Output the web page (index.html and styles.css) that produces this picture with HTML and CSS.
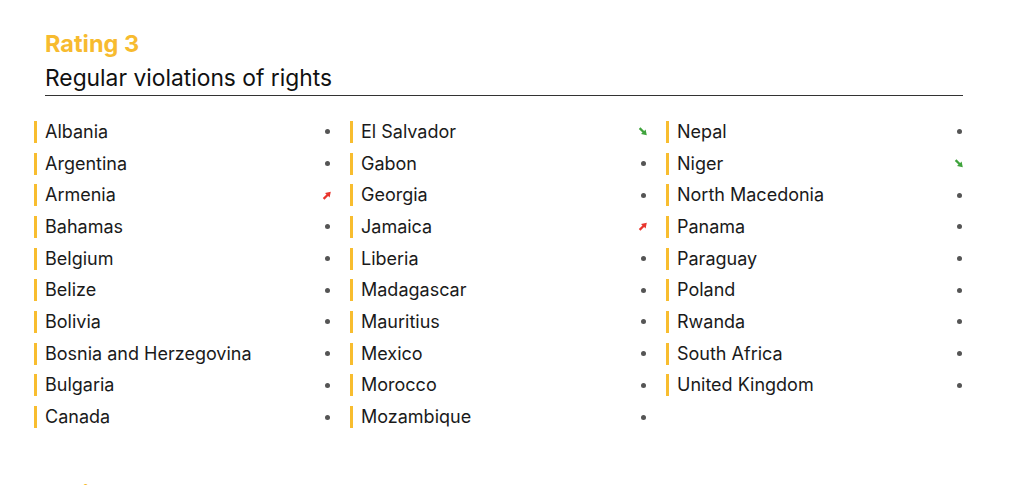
FILE: index.html
```html
<!DOCTYPE html>
<html lang="en">
<head>
<meta charset="utf-8">
<title>Rating 3</title>
<link rel="stylesheet" href="styles.css">
</head>
<body>
<section class="rating">
  <header class="rating-head">
    <h2 class="rating-title">Rating 3</h2>
    <h3 class="rating-sub">Regular violations of rights</h3>
  </header>
  <div class="cols">
    <ul class="col">
      <li class="row"><span class="name">Albania</span><span class="ind dot"></span></li>
      <li class="row"><span class="name">Argentina</span><span class="ind dot"></span></li>
      <li class="row"><span class="name">Armenia</span><span class="ind"><svg class="arrow up" viewBox="0 0 10 10"><path d="M0.8 7.6 L4.5 3.9 L3 2.4 L8.8 1.2 L7.6 7 L6.1 5.5 L2.4 9.2 Z"/></svg></span></li>
      <li class="row"><span class="name">Bahamas</span><span class="ind dot"></span></li>
      <li class="row"><span class="name">Belgium</span><span class="ind dot"></span></li>
      <li class="row"><span class="name">Belize</span><span class="ind dot"></span></li>
      <li class="row"><span class="name">Bolivia</span><span class="ind dot"></span></li>
      <li class="row"><span class="name">Bosnia and Herzegovina</span><span class="ind dot"></span></li>
      <li class="row"><span class="name">Bulgaria</span><span class="ind dot"></span></li>
      <li class="row"><span class="name">Canada</span><span class="ind dot"></span></li>
    </ul>
    <ul class="col">
      <li class="row"><span class="name">El Salvador</span><span class="ind"><svg class="arrow down" viewBox="0 0 10 10"><path d="M0.8 2.4 L4.5 6.1 L3 7.6 L8.8 8.8 L7.6 3 L6.1 4.5 L2.4 0.8 Z"/></svg></span></li>
      <li class="row"><span class="name">Gabon</span><span class="ind dot"></span></li>
      <li class="row"><span class="name">Georgia</span><span class="ind dot"></span></li>
      <li class="row"><span class="name">Jamaica</span><span class="ind"><svg class="arrow up" viewBox="0 0 10 10"><path d="M0.8 7.6 L4.5 3.9 L3 2.4 L8.8 1.2 L7.6 7 L6.1 5.5 L2.4 9.2 Z"/></svg></span></li>
      <li class="row"><span class="name">Liberia</span><span class="ind dot"></span></li>
      <li class="row"><span class="name">Madagascar</span><span class="ind dot"></span></li>
      <li class="row"><span class="name">Mauritius</span><span class="ind dot"></span></li>
      <li class="row"><span class="name">Mexico</span><span class="ind dot"></span></li>
      <li class="row"><span class="name">Morocco</span><span class="ind dot"></span></li>
      <li class="row"><span class="name">Mozambique</span><span class="ind dot"></span></li>
    </ul>
    <ul class="col">
      <li class="row"><span class="name">Nepal</span><span class="ind dot"></span></li>
      <li class="row"><span class="name">Niger</span><span class="ind"><svg class="arrow down" viewBox="0 0 10 10"><path d="M0.8 2.4 L4.5 6.1 L3 7.6 L8.8 8.8 L7.6 3 L6.1 4.5 L2.4 0.8 Z"/></svg></span></li>
      <li class="row"><span class="name">North Macedonia</span><span class="ind dot"></span></li>
      <li class="row"><span class="name">Panama</span><span class="ind dot"></span></li>
      <li class="row"><span class="name">Paraguay</span><span class="ind dot"></span></li>
      <li class="row"><span class="name">Poland</span><span class="ind dot"></span></li>
      <li class="row"><span class="name">Rwanda</span><span class="ind dot"></span></li>
      <li class="row"><span class="name">South Africa</span><span class="ind dot"></span></li>
      <li class="row"><span class="name">United Kingdom</span><span class="ind dot"></span></li>
    </ul>
  </div>
</section>
<section class="rating next">
  <header class="rating-head">
    <h2 class="rating-title">Rating 4</h2>
  </header>
</section>
</body>
</html>
```

FILE: styles.css
```css
html, body {
  margin: 0;
  padding: 0;
  background: #ffffff;
}
body {
  font-family: "Inter", "Liberation Sans", sans-serif;
  color: #1a1a1a;
  padding: 29px 56px 0 34px;
  overflow: hidden;
  height: 485px;
  box-sizing: border-box;
}
.rating-head {
  margin-left: 11px;
  border-bottom: 1px solid #333333;
  padding-bottom: 2px;
}
.rating-title {
  margin: 0;
  font-size: 23.5px;
  line-height: 30px;
  font-weight: 700;
  color: #f7bb2f;
}
.rating-sub {
  margin: 4px 0 0 0;
  font-size: 22.8px;
  line-height: 30px;
  font-weight: 400;
  color: #111111;
}
.cols {
  display: grid;
  grid-template-columns: repeat(3, 1fr);
  column-gap: 19px;
  margin-top: 20px;
}
.col {
  list-style: none;
  margin: 0;
  padding: 0;
}
.row {
  display: flex;
  align-items: center;
  justify-content: space-between;
  height: 31.7px;
}
.name {
  border-left: 3.5px solid #f8bd2f;
  padding-left: 8px;
  font-size: 18px;
  line-height: 22px;
}
.ind {
  width: 10px;
  display: flex;
  justify-content: center;
  align-items: center;
  margin-right: -1px;
}
.dot::before {
  content: "";
  width: 5px;
  height: 5px;
  border-radius: 50%;
  background: #555555;
}
.arrow {
  width: 11px;
  height: 11px;
}
.arrow.up { fill: #e8352d; }
.arrow.down { fill: #3fa33c; }
.next {
  margin-top: 46px;
}
.next .rating-head {
  border-bottom: none;
}
```
